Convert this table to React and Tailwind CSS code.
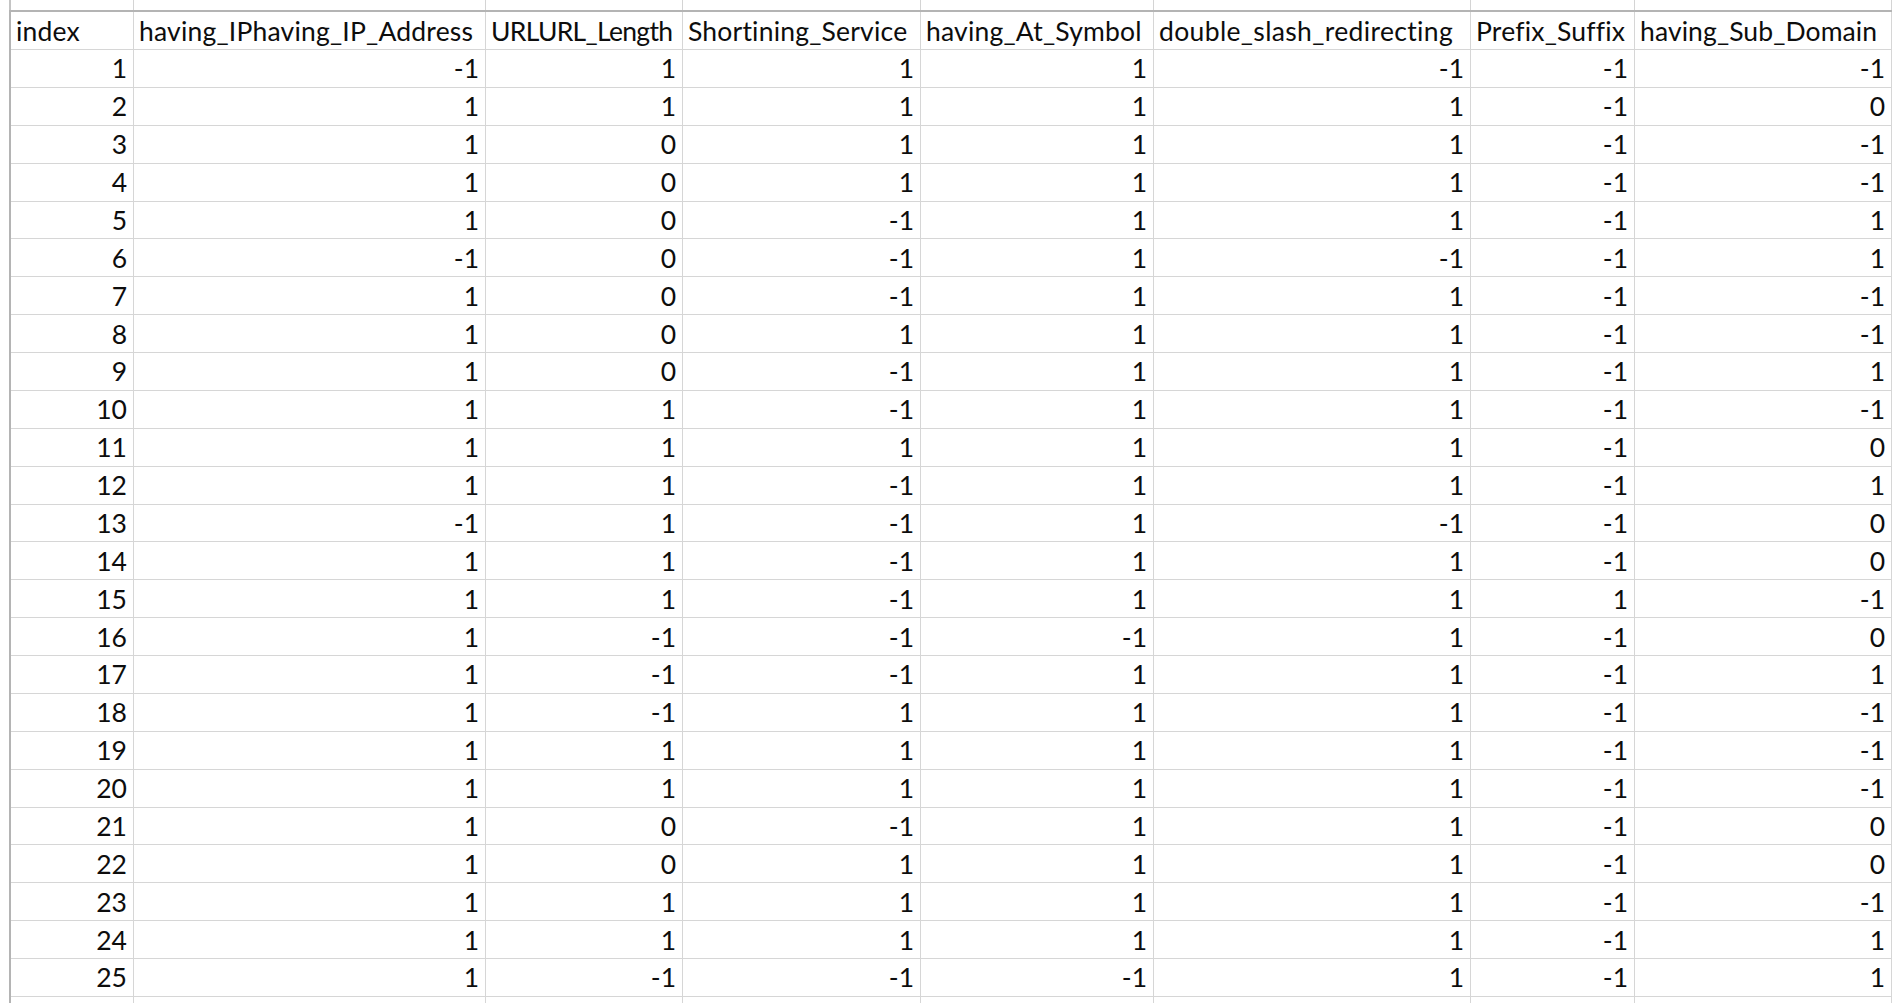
import React from "react";

const headers = [
  { t: "index", c: "tracking-[0.2px]" },
  { t: "having_IPhaving_IP_Address", c: "tracking-[0.2px]" },
  { t: "URLURL_Length", c: "tracking-[-0.7px]" },
  { t: "Shortining_Service", c: "tracking-[0.2px]" },
  { t: "having_At_Symbol", c: "tracking-[0.2px]" },
  { t: "double_slash_redirecting", c: "tracking-[0.35px]" },
  { t: "Prefix_Suffix", c: "tracking-[0.2px]" },
  { t: "having_Sub_Domain", c: "tracking-[0.1px]" },
];

const data = [
  [-1, 1, 1, 1, -1, -1, -1],
  [1, 1, 1, 1, 1, -1, 0],
  [1, 0, 1, 1, 1, -1, -1],
  [1, 0, 1, 1, 1, -1, -1],
  [1, 0, -1, 1, 1, -1, 1],
  [-1, 0, -1, 1, -1, -1, 1],
  [1, 0, -1, 1, 1, -1, -1],
  [1, 0, 1, 1, 1, -1, -1],
  [1, 0, -1, 1, 1, -1, 1],
  [1, 1, -1, 1, 1, -1, -1],
  [1, 1, 1, 1, 1, -1, 0],
  [1, 1, -1, 1, 1, -1, 1],
  [-1, 1, -1, 1, -1, -1, 0],
  [1, 1, -1, 1, 1, -1, 0],
  [1, 1, -1, 1, 1, 1, -1],
  [1, -1, -1, -1, 1, -1, 0],
  [1, -1, -1, 1, 1, -1, 1],
  [1, -1, 1, 1, 1, -1, -1],
  [1, 1, 1, 1, 1, -1, -1],
  [1, 1, 1, 1, 1, -1, -1],
  [1, 0, -1, 1, 1, -1, 0],
  [1, 0, 1, 1, 1, -1, 0],
  [1, 1, 1, 1, 1, -1, -1],
  [1, 1, 1, 1, 1, -1, 1],
  [1, -1, -1, -1, 1, -1, 1],
];

const gridCols =
  "grid grid-cols-[123px_352px_197px_238px_233px_317px_164px_257px]";

export default function App() {
  return (
    <div className="relative h-[1003px] w-[1900px] overflow-hidden bg-white font-['Lato',sans-serif] text-[#0d0d0d]">
      <div className="ml-[9px] flex h-[10px] w-[1883px] border-l-2 border-[#c4c4c4]">
        <div className={`${gridCols} h-full`}>
          {headers.map((h) => (
            <div key={h.t} className="border-r border-[#d4d4d4]" />
          ))}
        </div>
      </div>
      <div className="ml-[9px] w-[1883px] border-l-2 border-t-2 border-[#b4b4b4]">
        <div className={`${gridCols} h-[38px]`}>
          {headers.map((h) => (
            <div
              key={h.t}
              className={`flex items-end overflow-hidden whitespace-nowrap border-b border-r border-[#d6d6d6] pb-[5px] pl-[5px] text-[26.5px] leading-none ${h.c}`}
            >
              {h.t}
            </div>
          ))}
        </div>
        {data.map((row, i) => (
          <div key={i} className={`${gridCols} h-[37.88px]`}>
            {[i + 1, ...row].map((v, j) => (
              <div
                key={j}
                className="flex items-end justify-end overflow-hidden whitespace-nowrap border-b border-r border-[#d6d6d6] pb-[5px] pr-[6px] text-[26.5px] leading-none"
              >
                {v}
              </div>
            ))}
          </div>
        ))}
        <div className={`${gridCols} h-[37.88px]`}>
          {headers.map((h) => (
            <div key={h.t} className="border-r border-[#d6d6d6]" />
          ))}
        </div>
      </div>
    </div>
  );
}
